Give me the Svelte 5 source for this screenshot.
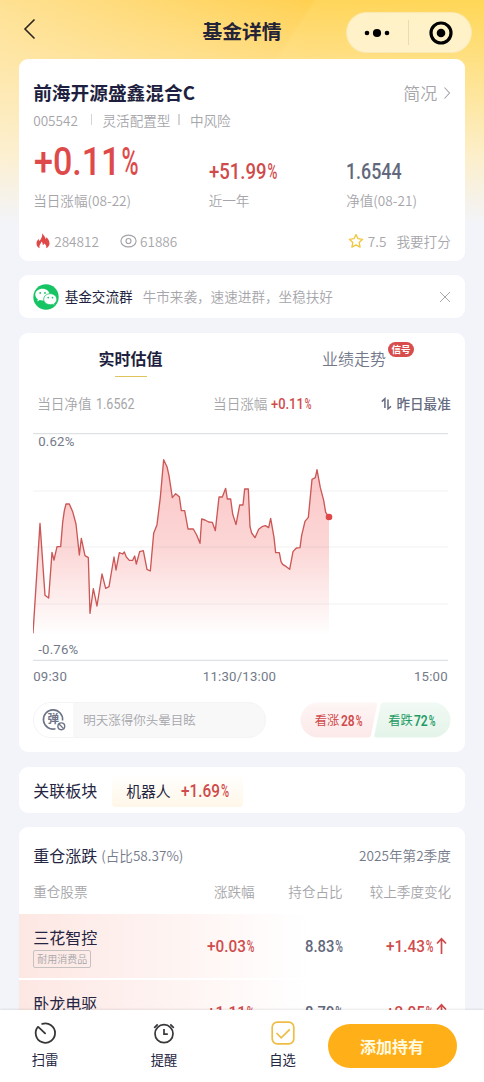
<script>
  const pts = [
    [0,599],[21,269],[36,485],[47,493],[57,356],[63,379],[72,339],[83,339],[89,266],[94,231],[99,211],[109,211],
    [119,234],[129,271],[139,364],[145,314],[156,366],[166,372],[171,539],[181,465],[192,517],[207,421],[218,464],
    [228,459],[243,370],[249,409],[259,357],[269,361],[274,355],[280,370],[289,380],[299,380],[305,367],[310,391],
    [320,354],[331,351],[342,407],[352,412],[362,299],[372,273],[382,191],[392,78],[402,99],[408,126],[418,192],
    [428,180],[439,189],[445,231],[455,231],[465,286],[481,286],[491,304],[501,329],[506,256],[516,259],[527,265],
    [538,266],[547,291],[558,190],[568,190],[578,164],[583,196],[593,196],[599,241],[609,273],[620,214],[630,214],
    [635,166],[646,166],[651,279],[656,298],[666,312],[677,287],[687,279],[697,276],[707,282],[713,254],[723,311],
    [728,357],[739,357],[744,384],[749,392],[760,399],[770,407],[780,354],[790,343],[801,342],[806,305],[816,263],
    [826,251],[837,137],[847,132],[852,108],[862,162],[872,200],[878,236],[888,250]
  ];
  const line = pts.map((p) => p.join(',')).join(' ');
  const area = `0,606 ${line} 888,606`;
  const stocks = [
    { name: '三花智控', tag: '耐用消费品', chg: '+0.03', share: '8.83', diff: '+1.43' },
    { name: '卧龙电驱', tag: '', chg: '+1.11', share: '8.79', diff: '+2.05' }
  ];
  // Approximate advance of a figure string, in px, before it is condensed.
  const advance = (text, size) => [...text].reduce((sum, c) => sum + (c === '.' ? 0.27 : 0.563), 0) * size;
</script>

{#snippet num(text, w, size, pct = true, weight = 500)}
  {@const pw = pct ? size * 0.45 : 0}
  {@const body = w - pw - (pct ? 1 : 0)}
  {@const full = advance(text, size)}
  <svg class="num" width={w} height={size * 0.711} font-size={size} font-weight={weight}>
    <text transform="translate(0 {size * 0.711}) scale({body / full} 1)" textLength={full} lengthAdjust="spacingAndGlyphs">{text}</text>
    {#if pct}
      <text transform="translate({w - pw} {size * 0.711}) scale({pw / (size * 0.735)} 1)" textLength={size * 0.735} lengthAdjust="spacingAndGlyphs">%</text>
    {/if}
  </svg>
{/snippet}

<div class="page">
  <main>
    <header>
      <svg class="back" width="14" height="22" viewBox="0 0 14 22"><path d="M11.500 1.500 2 11l9.500 9.500" fill="none" stroke="#2b2620" stroke-width="1.600" /></svg>
      <h1>基金详情</h1>
      <div class="capsule">
        <svg width="28" height="12" viewBox="0 0 28 12"><circle cx="4" cy="6" r="2.300" /><circle cx="14" cy="6" r="4.100" /><circle cx="24" cy="6" r="2.300" /></svg>
        <i></i>
        <svg width="24" height="24" viewBox="0 0 24 24"><circle cx="12" cy="12" r="10" fill="none" stroke="#000" stroke-width="3.200" /><circle cx="12" cy="12" r="4.300" /></svg>
      </div>
    </header>

    <section class="card summary">
      <div class="name-row">
        <h2>前海开源盛鑫混合C</h2>
        <span class="brief">简况<svg width="8" height="14" viewBox="0 0 8 14"><path d="M1.500 1.500 6.500 7l-5 5.500" fill="none" stroke="#a3a3a8" stroke-width="1.100" /></svg></span>
      </div>
      <div class="meta"><span>005542</span><i class="first"></i><span>灵活配置型</span><i></i><span>中风险</span></div>
      <div class="figures">
        <div class="red"><div class="fig big">{@render num('+0.11', 104.500, 38)}</div><p>当日涨幅(08-22)</p></div>
        <div class="red"><div class="fig">{@render num('+51.99', 68.500, 22)}</div><p>近一年</p></div>
        <div class="slate"><div class="fig">{@render num('1.6544', 55.500, 22, false)}</div><p>净值(08-21)</p></div>
      </div>
      <div class="stats">
        <svg width="14" height="16" viewBox="0 0 14 16"><path d="M6.200.3c.9 2 3 3 3.400 5.600.5-.4.800-1 .9-1.700 1.700 1.700 3 3.700 3 6 0 2.400-1.400 4.200-3.300 5 .5-1.900-.3-3.500-1.900-4.600-.3.900-.8 1.300-1.500 1.600.1-1.600-.5-2.800-1.500-3.600-.1 2.100-1.900 3.200-1.900 5 0 .7.100 1.200.4 1.700C1.700 14.400.5 12.700.5 10.500c0-2.200 1.200-3.500 2.300-4.400-.1.800.1 1.500.5 2C5.300 6.300 6.500 3.300 6.200.3z" fill="#e04848" /></svg>
        <span class="hot">284812</span>
        <svg width="17" height="14" viewBox="0 0 17 14" fill="none" stroke="#a3a3a8" stroke-width="1.150"><ellipse cx="8.500" cy="7" rx="7.600" ry="5.900" /><circle cx="8.500" cy="7" r="2.500" /></svg>
        <span class="seen">61886</span>
        <svg class="star" width="16" height="16" viewBox="0 0 16 16"><path d="m8 1.500 2 4.200 4.600.6-3.400 3.200.9 4.600L8 11.900l-4.100 2.200.9-4.600L1.400 6.300 6 5.700z" fill="none" stroke="#efc638" stroke-width="1.300" stroke-linejoin="round" /></svg>
        <span class="score">7.5</span><span>我要打分</span>
      </div>
    </section>

    <section class="card group">
      <svg width="26" height="26" viewBox="0 0 26 26">
        <circle cx="13" cy="13" r="12.700" fill="#16c464" />
        <path d="M9.500 4.800c-4 0-7.200 2.600-7.200 5.900 0 1.900 1 3.500 2.600 4.600l-.7 2.200 2.600-1.400c.9.300 1.800.4 2.700.4 4 0 7.200-2.600 7.200-5.800S13.500 4.800 9.500 4.800z" fill="#fff" />
        <path d="M17.300 9.700c-3.700 0-6.600 2.400-6.600 5.500s2.900 5.500 6.600 5.500c.8 0 1.600-.1 2.300-.4l2.300 1.300-.6-2c1.500-1 2.500-2.600 2.500-4.400 0-3.100-2.900-5.500-6.500-5.500z" fill="#fff" stroke="#16c464" stroke-width=".8" />
        <g fill="#16c464"><circle cx="7.200" cy="8.900" r=".95" /><circle cx="12" cy="8.900" r=".95" /><circle cx="15.200" cy="13.600" r=".85" /><circle cx="19.500" cy="13.600" r=".85" /></g>
      </svg>
      <b>基金交流群</b><span>牛市来袭，速速进群，坐稳扶好</span>
      <svg class="close" width="12" height="12" viewBox="0 0 12 12"><path d="m1 1 10 10M11 1 1 11" stroke="#a8a8ac" stroke-width="1" /></svg>
    </section>

    <section class="card trend">
      <div class="tabs">
        <div class="tab active">实时估值</div>
        <div class="tab">业绩走势<em>信号</em></div>
      </div>
      <div class="today">
        <span>当日净值</span><span class="v">{@render num('1.6562', 38.500, 15, false, 400)}</span>
        <span class="second">当日涨幅</span><span class="v red">{@render num('+0.11', 40.500, 15)}</span>
        <span class="best"><svg width="11" height="13" viewBox="0 0 11 13" fill="none" stroke="#666b80" stroke-width="1.500"><path d="M.8 4.600 3.900 1.700V11M7 2.500v9.300L10 9.300" /></svg>昨日最准</span>
      </div>
      <div class="plot">
        <svg width="415" height="228" viewBox="0 -2 1245 684">
          <defs><linearGradient id="fade" x1="0" y1="78" x2="0" y2="606" gradientUnits="userSpaceOnUse"><stop offset="0" stop-color="#fbc6c6" /><stop offset=".5" stop-color="#fcd6d6" /><stop offset="1" stop-color="#fff" /></linearGradient></defs>
          <polygon points={area} fill="url(#fade)" />
          <g stroke="#a0a3ab" stroke-opacity=".15" stroke-width="3"><path d="M0 172h1245M0 340h1245M0 511h1245" /></g>
          <g stroke="#dfe2e4" stroke-width="4"><path d="M0 0h1245M0 680h1245" /></g>
          <polyline points={line} fill="none" stroke="#cb5756" stroke-width="4" stroke-linejoin="round" />
          <circle cx="888" cy="250" r="10" fill="#de4848" />
        </svg>
        <span class="hi">0.62%</span><span class="lo">-0.76%</span>
      </div>
      <div class="axis"><span>09:30</span><span>11:30/13:00</span><span>15:00</span></div>
      <div class="vote-row">
        <div class="bullet">
          <div class="dan">
            <svg width="25" height="24" viewBox="0 0 25 24" fill="none" stroke="#6d7388"><path d="M20.600 12.500A9.600 9.600 0 1 0 13.500 20.800" stroke-width="1.600" /><circle cx="19.300" cy="18.300" r="3.400" stroke-width="1.400" /><path d="m17 16 4.600 4.600" stroke-width="1.300" /><text x="11.300" y="15.300" text-anchor="middle" font-size="11.500" font-weight="700" fill="#6d7388" stroke="none">弹</text></svg>
          </div>
          <span>明天涨得你头晕目眩</span>
        </div>
        <div class="vote">
          <svg width="151" height="36" viewBox="0 0 151 36">
            <defs><linearGradient id="up" x2="0" y2="1"><stop stop-color="#fef5f5" /><stop offset="1" stop-color="#fce9e9" /></linearGradient><linearGradient id="down" x2="0" y2="1"><stop stop-color="#f1f9f4" /><stop offset="1" stop-color="#e4f4e9" /></linearGradient></defs>
            <path d="M18 .5h57q2.500 0 2 2.500l-6 30q-.5 2.500-3 2.500H18a17.500 17.500 0 0 1 0-35z" fill="url(#up)" />
            <path d="M83 .5h50a17.500 17.500 0 0 1 0 35H76.500q-2.500 0-2-2.500l6-30q.5-2.500 2.500-2.500z" fill="url(#down)" />
          </svg>
          <span class="up">看涨{@render num('28', 21.500, 15, true, 600)}</span>
          <span class="down">看跌{@render num('72', 21.500, 15, true, 600)}</span>
        </div>
      </div>
    </section>

    <section class="card sector">
      <h3>关联板块</h3>
      <div class="chip">机器人<span class="red">{@render num('+1.69', 48, 18)}</span></div>
    </section>

    <section class="card holdings">
      <div class="hold-head"><h3>重仓涨跌</h3><span>(占比58.37%)</span><span class="season">2025年第2季度</span></div>
      <div class="grid cols"><span>重仓股票</span><span>涨跌幅</span><span>持仓占比</span><span>较上季度变化</span></div>
      {#each stocks as s}
        <div class="grid stock">
          <div class="who"><strong>{s.name}</strong>{#if s.tag}<small>{s.tag}</small>{/if}</div>
          <span class="red">{@render num(s.chg, 47.500, 17)}</span>
          <span class="slate">{@render num(s.share, 38, 17)}</span>
          <span class="red diff">{@render num(s.diff, 47.500, 17)}<svg width="11" height="18" viewBox="0 0 11 18"><path d="M5.500 17V2M1 6.500 5.500 1.700 10 6.500" fill="none" stroke="#cf4b4b" stroke-width="1.700" /></svg></span>
        </div>
      {/each}
    </section>
  </main>

  <footer>
    <div class="act one"><svg width="24" height="24" viewBox="0 0 24 24" fill="none" stroke="#37373b" stroke-width="1.800" stroke-linecap="round"><path d="M9.200 2.900A9.700 9.700 0 1 1 4.800 6M5.500 6.200l6.600 6.100" /></svg>扫雷</div>
    <div class="act two"><svg width="24" height="24" viewBox="0 0 24 24" fill="none" stroke="#37373b" stroke-width="1.700"><circle cx="12" cy="12.700" r="9" /><path d="M12 8v5.200h3.800M2.200 6.800l3.500-3.500M21.800 6.800l-3.500-3.500" /></svg>提醒</div>
    <div class="act three"><svg width="24" height="24" viewBox="0 0 24 24" fill="none" stroke="#eebd45" stroke-width="1.700"><rect x="1.200" y="1.200" width="21.600" height="21.600" rx="5" /><path d="m5.500 12 4.700 4.800 8.600-8.500" /></svg>自选</div>
    <button>添加持有</button>
  </footer>
</div>

<style>
  :global(body) { background: #f3f4fa; }
  * { box-sizing: border-box; margin: 0; }
  .page {
    width: 484px; height: 1082px; overflow: hidden; display: flex; flex-direction: column;
    font-family: "Noto Sans CJK SC", sans-serif; font-size: 13.6px; line-height: 20px; color: #a6a6aa; font-weight: 350; white-space: nowrap;
    background:
      linear-gradient(180deg, rgba(243,244,250,0) 0, rgba(254,240,205,.42) 65px, rgba(252,242,218,.88) 155px, #f3f4fa 225px),
      linear-gradient(123deg, transparent 262px, rgba(255,232,130,.22) 266px, rgba(255,220,90,.05) 450px),
      linear-gradient(100deg, #fee193, #ffd050 60%, #ffd754);
    background-size: 100% 230px; background-repeat: no-repeat; background-color: #f3f4fa;
  }
  main { height: 1010px; flex: none; overflow: hidden; display: flex; flex-direction: column; }
  svg { flex: none; display: block; }
  .num { font-family: Roboto, sans-serif; fill: currentColor; overflow: visible; }
  .red { color: #cf4b4b; }
  .slate { color: #62687c; }
  header { height: 59px; flex: none; display: grid; grid-template-columns: 1fr auto 1fr; align-items: start; }
  .back { margin: 18px 0 0 23px; }
  h1 { font-size: 19.8px; line-height: 30px; font-weight: 700; color: #242338; padding-top: 16px; }
  .capsule { justify-self: end; margin: 12px 12.5px 0 0; width: 126px; height: 41px; border-radius: 21px; border: 1px solid rgba(240,215,140,.35); background: rgba(255,246,216,.85); display: flex; align-items: center; padding-left: 16px; }
  .capsule i { width: 1px; height: 25px; background: #e9dcb4; margin: 0 20px 0 17px; }
  .card { flex: none; background: #fff; border-radius: 9px; margin: 0 18.600px 14.500px; padding: 0 14.600px; }
  .summary { height: 201.500px; }
  .name-row { display: flex; justify-content: space-between; align-items: center; padding-top: 19.500px; height: 47px; }
  h2 { font-size: 18.700px; line-height: 28px; color: #1e1f40; font-weight: 700; }
  .brief { display: flex; gap: 5.500px; align-items: center; font-size: 17px; margin-top: 2px; }
  .meta { display: flex; align-items: center; height: 27px; }
  .meta i { width: 1.500px; height: 11px; background: #d5d5d8; margin: 0 10px 0 8px; }
  .meta i.first { margin: 0 10px 0 13px; }
  .figures { display: grid; grid-template-columns: 175.500px 137.500px 1fr; height: 77px; align-items: end; }
  .figures p { color: #a6a6aa; height: 20px; margin-top: 11px; }
  .fig.big { padding: 0 0 3.500px 1px; color: #de4a4a; }
  .stats { display: flex; align-items: center; margin-top: 20.500px; height: 20px; padding-left: 3px; }
  .hot { margin: 0 21px 0 4px; }
  .seen { margin-left: 3px; }
  .star { margin: 0 4px 0 auto; }
  .score { margin-right: 10px; }
  .group { height: 43px; display: flex; align-items: center; }
  .group b { font-weight: 400; color: #1e1f40; margin: 0 10px 0 5.500px; }
  .group b, .group span { position: relative; top: -.5px; }
  .close { margin: 1.500px 0 0 auto; }
  .trend { height: 419.500px; }
  .tabs { display: grid; grid-template-columns: 194px 252px; margin: 0 -14.600px; height: 53px; padding-top: 12.500px; }
  .tab { justify-self: center; position: relative; font-size: 16px; line-height: 26px; color: #72778a; padding-left: 30px; }
  .tab:last-child { padding-left: 31px; }
  .active { color: #1e1f40; font-weight: 700; }
  .active::after { content: ""; position: absolute; left: 46px; top: 30.500px; width: 32px; height: 1.500px; background: #dfc45c; }
  .tab em { position: absolute; left: 97px; top: -3.500px; width: 26px; height: 15px; border-radius: 8px; background: #d94c4c; color: #fff; font: 700 9.600px/15px "Noto Sans CJK SC", sans-serif; text-align: center; }
  .today { display: flex; align-items: center; height: 35px; padding-left: 4px; }
  .v { margin-left: 4px; }
  .second { margin-left: 79px; }
  .best { display: flex; align-items: center; gap: 4px; margin-left: auto; color: #666b80; font-weight: 500; }
  .plot { position: relative; margin-top: 12px; height: 228px; }
  .plot span, .axis { font-family: Roboto, sans-serif; font-size: 13.200px; line-height: 16px; color: #737a89; letter-spacing: .2px; font-weight: 400; }
  .plot .hi, .plot .lo { position: absolute; left: 5px; top: 1px; }
  .plot .lo { top: 209px; }
  .axis { display: flex; justify-content: space-between; margin: 8px 3px 0 0; }
  .axis span:nth-child(2) { margin-left: -2px; }
  .vote-row { display: flex; justify-content: space-between; margin-top: 17.500px; height: 36px; }
  .bullet { width: 233px; border: 1.500px solid #f4f4f5; border-radius: 18px; background: #f8f8f9; display: flex; align-items: center; overflow: hidden; font-size: 12.500px; }
  .dan { width: 39px; height: 100%; background: #fff; padding: 5px 0 0 8px; margin-right: 10px; }
  .vote { position: relative; width: 151px; }
  .vote span { position: absolute; top: 8px; display: flex; align-items: center; gap: 1.500px; font-size: 12.300px; font-weight: 400; }
  .up { left: 15px; color: #cf4b4b; }
  .down { left: 88.500px; color: #1e9b65; }
  .sector { height: 46px; display: flex; align-items: center; }
  h3 { font-size: 16px; line-height: 24px; font-weight: 400; color: #242542; }
  .chip { height: 33px; margin: 2px 0 0 15px; width: 131px; padding-left: 14px; display: flex; align-items: center; gap: 10px; background: linear-gradient(#fff, #fff7e8); font-size: 14.800px; font-weight: 400; color: #242542; border-radius: 4px; }
  .holdings { height: 300px; margin-bottom: 0; overflow: hidden; }
  .hold-head { display: flex; align-items: center; gap: 4px; padding-top: 17px; height: 38px; color: #747a8a; }
  .season { margin-left: auto; }
  .grid { display: grid; grid-template-columns: 150px 71.500px 88px 108.500px; align-items: center; }
  .grid > span { justify-self: end; }
  .grid > span:first-child { justify-self: start; }
  .cols { height: 49px; padding-top: 2px; }
  .stock { height: 64px; margin: 0 -14.600px 2px; padding: 0 14.600px; background: linear-gradient(90deg, #fde7e3, #fff 65%); }
  .who { height: 43px; }
  .stock strong { display: block; font-size: 16px; line-height: 24px; margin-bottom: 1px; font-weight: 400; color: #242542; }
  .stock small { display: inline-block; vertical-align: top; font-size: 10px; line-height: 16px; border: 1px solid #c5c1c1; border-radius: 2px; padding: 0 3px; }
  .diff { display: flex; align-items: center; gap: 3px; padding-right: 4px; }
  footer { position: relative; height: 72px; background: #fff; box-shadow: 0 -1px 2px rgba(0,0,0,.09); display: flex; }
  .act { display: flex; flex-direction: column; align-items: center; gap: 5px; padding-top: 11px; font-size: 13.300px; font-weight: 400; color: #242542; width: 40px; }
  .one { margin-left: 25px; }
  .two { margin-left: 79px; }
  .three { margin-left: 78.500px; }
  button { margin: 14px 0 0 25px; width: 129px; height: 44px; border: 0; border-radius: 22px; background: #ffaf17; color: #fffbe2; font: 700 16px/44px "Noto Sans CJK SC", sans-serif; padding: 0; }
</style>
